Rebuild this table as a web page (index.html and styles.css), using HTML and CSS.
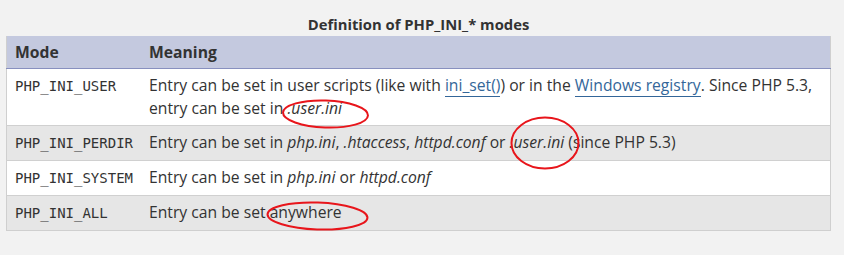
FILE: index.html
```html
<!DOCTYPE html>
<html>
<head>
<meta charset="utf-8">
<link rel="stylesheet" href="styles.css">
</head>
<body>
<div class="page">
  <table class="doctable">
    <caption>Definition of PHP_INI_* modes</caption>
    <thead>
      <tr><th class="c1">Mode</th><th>Meaning</th></tr>
    </thead>
    <tbody>
      <tr>
        <td class="c1"><code>PHP_INI_USER</code></td>
        <td>Entry can be set in user scripts (like with <a href="#">ini_set()</a>) or in the <a href="#">Windows registry</a>. Since PHP 5.3, entry can be set in <em>.user.ini</em></td>
      </tr>
      <tr class="alt">
        <td class="c1"><code>PHP_INI_PERDIR</code></td>
        <td>Entry can be set in <em>php.ini</em>, <em>.htaccess</em>, <em>httpd.conf</em> or <em>.user.ini</em> (since PHP 5.3)</td>
      </tr>
      <tr>
        <td class="c1"><code>PHP_INI_SYSTEM</code></td>
        <td>Entry can be set in <em>php.ini</em> or <em>httpd.conf</em></td>
      </tr>
      <tr class="alt">
        <td class="c1"><code>PHP_INI_ALL</code></td>
        <td>Entry can be set anywhere</td>
      </tr>
    </tbody>
  </table>
  <svg class="marks" width="844" height="255" viewBox="0 0 844 255">
    <ellipse cx="325.5" cy="114" rx="42.5" ry="13.5" transform="rotate(2 325.5 114)"/>
    <ellipse cx="545" cy="143" rx="33.5" ry="25.5"/>
    <ellipse cx="317.5" cy="216" rx="50" ry="13.5" transform="rotate(2 317.5 216)"/>
  </svg>
</div>
</body>
</html>
```
FILE: styles.css
```css
html, body {
  margin: 0;
  padding: 0;
  background: #f2f2f2;
}
.page {
  position: relative;
  width: 844px;
  height: 255px;
  padding: 13px 0 0 6px;
  box-sizing: border-box;
  font-family: "Open Sans", "Noto Sans", sans-serif;
  font-size: 15.7px;
  color: #333;
}
.doctable {
  width: 825px;
  border-collapse: collapse;
  border: 1px solid #cfcfcf;
  border-top: 0;
}
.doctable caption {
  font-weight: bold;
  font-size: 14.8px;
  line-height: 23px;
  color: #333;
  padding-bottom: 0;
}
.doctable th {
  background: #c4c9df;
  text-align: left;
  font-weight: bold;
  line-height: 23px;
  padding: 5px 8px 4px;
  border-bottom: 1px solid #8890bf;
}
.doctable td {
  line-height: 23px;
  padding: 5px 8px;
  vertical-align: top;
  border-top: 1px solid #d0d0d0;
  background: #fff;
}
.doctable th.c1, .doctable td.c1 {
  width: 118px;
}
.doctable tr.alt td {
  background: #e6e6e6;
}
code {
  font-family: "DejaVu Sans Mono", monospace;
  font-size: 14px;
}
a {
  color: #369;
  text-decoration: none;
  border-bottom: 1px solid #369;
}
.marks {
  position: absolute;
  left: 0;
  top: 0;
  pointer-events: none;
}
.marks ellipse {
  fill: none;
  stroke: #e8151b;
  stroke-width: 2;
}
```
